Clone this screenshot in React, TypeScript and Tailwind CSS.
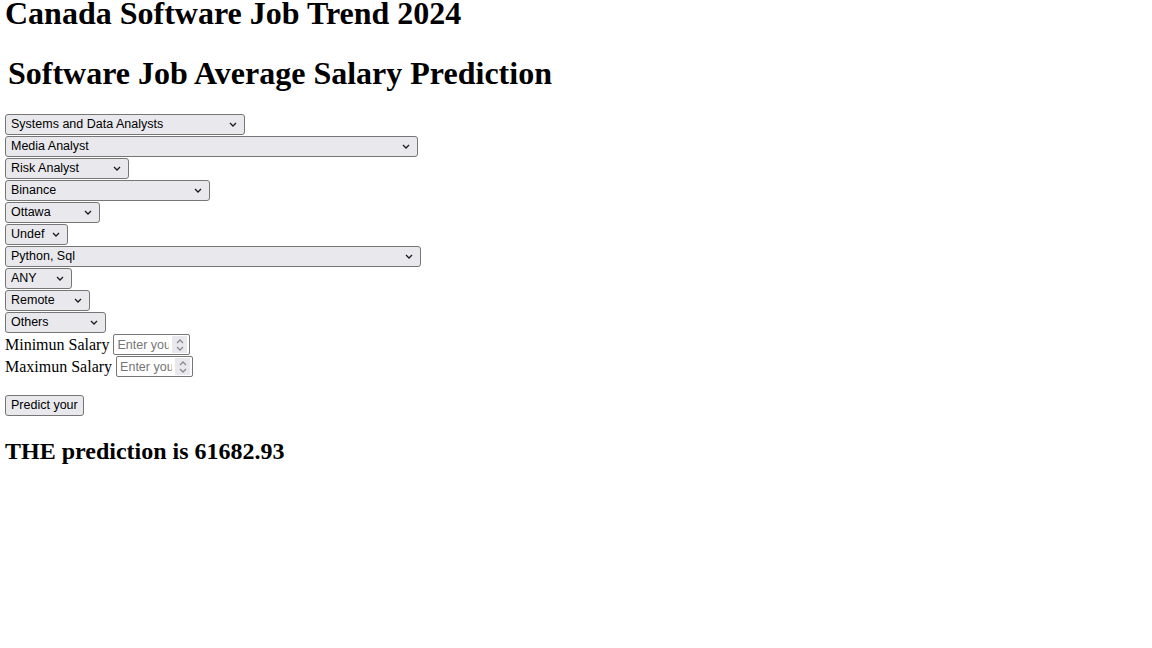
const SELECTS = [
  { value: "Systems and Data Analysts", width: "w-[240px]" },
  { value: "Media Analyst", width: "w-[413px]" },
  { value: "Risk Analyst", width: "w-[124px]" },
  { value: "Binance", width: "w-[205px]" },
  { value: "Ottawa", width: "w-[95px]" },
  { value: "Undef", width: "w-[63px]" },
  { value: "Python, Sql", width: "w-[416px]" },
  { value: "ANY", width: "w-[67px]" },
  { value: "Remote", width: "w-[85px]" },
  { value: "Others", width: "w-[101px]" },
];

const control =
  "h-[21px] border border-[#767676] bg-[#e9e9ed] rounded-[3px] text-[12.5px] text-black font-['Liberation_Sans',sans-serif]";

function Chevron({ up = false, className = "" }: { up?: boolean; className?: string }) {
  return (
    <svg width="8" height="5" viewBox="0 0 8 5" className={className}>
      <path
        d={up ? "M1 4 L4 1 L7 4" : "M1 1 L4 4 L7 1"}
        fill="none"
        stroke="currentColor"
        strokeWidth="1.3"
      />
    </svg>
  );
}

function NumberField({ placeholder }: { placeholder: string }) {
  return (
    <span className="relative ml-[4px] inline-flex">
      <input
        type="number"
        placeholder={placeholder}
        className="w-[77px] h-[21px] pl-[3px] pr-[20px] border border-[#767676] rounded-[2px] bg-white text-[12.5px] font-['Liberation_Sans',sans-serif] placeholder:text-[#757575] [appearance:textfield] [&::-webkit-inner-spin-button]:appearance-none [&::-webkit-outer-spin-button]:appearance-none"
      />
      <span className="absolute right-[3px] top-[2px] bottom-[2px] w-[15px] bg-[#e9e9ed] flex flex-col items-center justify-center gap-[2px] text-[#8a8a8a]">
        <Chevron up />
        <Chevron />
      </span>
    </span>
  );
}

export default function App() {
  return (
    <div className="min-h-screen bg-white text-black px-[5px] font-['Liberation_Serif',serif]">
      <h1 className="text-[32px] font-bold leading-[26px]">
        Canada Software Job Trend 2024
      </h1>
      <h1 className="mt-[34px] ml-[3px] text-[32px] font-bold leading-[26px]">
        Software Job Average Salary Prediction
      </h1>

      <div className="mt-[28px] flex flex-col gap-px items-start">
        {SELECTS.map((s) => (
          <span key={s.value} className="relative inline-flex">
            <select
              defaultValue={s.value}
              className={`${control} ${s.width} pl-[5px] appearance-none`}
            >
              <option value={s.value}>{s.value}</option>
            </select>
            <Chevron className="absolute right-[8px] top-[8px] text-[#1a1a1a] pointer-events-none" />
          </span>
        ))}
        <div className="flex items-center h-[21px] text-[16px]">
          <span>Minimun Salary</span>
          <NumberField placeholder="Enter your minimum salary" />
        </div>
        <div className="flex items-center h-[21px] text-[16px]">
          <span>Maximun Salary</span>
          <NumberField placeholder="Enter your maximum salary" />
        </div>
      </div>

      <button className={`${control} mt-[18px] px-[5px]`}>Predict your</button>

      <h2 className="mt-[25px] text-[24px] font-bold leading-[20px]">
        THE prediction is 61682.93
      </h2>
    </div>
  );
}
